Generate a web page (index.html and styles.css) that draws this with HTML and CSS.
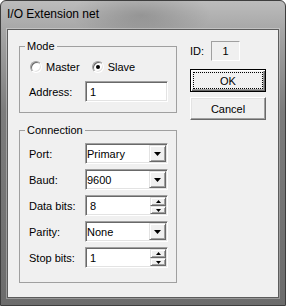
FILE: index.html
```html
<!DOCTYPE html>
<html lang="en">
<head>
    <meta charset="UTF-8">
    <title>I/O Extension net</title>
    <link rel="stylesheet" href="styles.css">
</head>
<body>
    <div class="window">
        <div class="titlebar">I/O Extension net</div>

        <div class="client">
            <div class="left">
                <fieldset class="group mode">
                    <legend>Mode</legend>
                    <div class="radios">
                        <label class="radio"><span class="dot"></span>Master</label>
                        <label class="radio"><span class="dot checked"></span>Slave</label>
                    </div>
                    <div class="row address">
                        <span class="lbl">Address:</span>
                        <div class="edit">1</div>
                    </div>
                </fieldset>

                <fieldset class="group conn">
                    <legend>Connection</legend>
                    <div class="row">
                        <span class="lbl">Port:</span>
                        <div class="combo">
                            <span class="val">Primary</span>
                            <span class="drop"><svg width="7" height="4"><polygon points="0,0 7,0 3.5,4" fill="#000"/></svg></span>
                        </div>
                    </div>
                    <div class="row">
                        <span class="lbl">Baud:</span>
                        <div class="combo">
                            <span class="val">9600</span>
                            <span class="drop"><svg width="7" height="4"><polygon points="0,0 7,0 3.5,4" fill="#000"/></svg></span>
                        </div>
                    </div>
                    <div class="row">
                        <span class="lbl">Data bits:</span>
                        <div class="spin">
                            <span class="val">8</span>
                            <span class="updown">
                                <span class="sbtn up"><svg width="5" height="3"><polygon points="2.5,0 5,3 0,3" fill="#000"/></svg></span>
                                <span class="sbtn down"><svg width="5" height="3"><polygon points="0,0 5,0 2.5,3" fill="#000"/></svg></span>
                            </span>
                        </div>
                    </div>
                    <div class="row">
                        <span class="lbl">Parity:</span>
                        <div class="combo">
                            <span class="val">None</span>
                            <span class="drop"><svg width="7" height="4"><polygon points="0,0 7,0 3.5,4" fill="#000"/></svg></span>
                        </div>
                    </div>
                    <div class="row">
                        <span class="lbl">Stop bits:</span>
                        <div class="spin">
                            <span class="val">1</span>
                            <span class="updown">
                                <span class="sbtn up"><svg width="5" height="3"><polygon points="2.5,0 5,3 0,3" fill="#000"/></svg></span>
                                <span class="sbtn down"><svg width="5" height="3"><polygon points="0,0 5,0 2.5,3" fill="#000"/></svg></span>
                            </span>
                        </div>
                    </div>
                </fieldset>
            </div>

            <div class="right">
                <div class="id-row">
                    <span class="id-lbl">ID:</span>
                    <span class="id-box">1</span>
                </div>
                <button class="btn default">OK</button>
                <button class="btn">Cancel</button>
            </div>
        </div>
    </div>
</body>
</html>
```

FILE: styles.css
```css
body {
    margin: 0;
    font-family: 'Liberation Sans', Arial, sans-serif;
    font-size: 11px;
    color: #000000;
    background-color: #ffffff;
}

.window {
    width: 286px;
    height: 306px;
    box-sizing: border-box;
    border: 1px solid #3e3e3e;
    border-radius: 6px 6px 0 0;
    padding: 0 6px 7px 6px;
    display: flex;
    flex-direction: column;
    background:
        radial-gradient(ellipse 70px 28px at 140px 14px, rgba(0, 0, 0, 0.16), rgba(0, 0, 0, 0)),
        linear-gradient(#bcbcbc, #a6a6a6 30px, #7c7c7c 110px, #6c6c6c);
}

.titlebar {
    height: 28px;
    box-sizing: border-box;
    padding-top: 6px;
    font-size: 12px;
    line-height: 15px;
    color: #000000;
}

.client {
    flex: 1;
    display: flex;
    border: 1px solid #5c5c5c;
    background-color: #f0f0f0;
    box-shadow: 0 0 0 1px rgba(255, 255, 255, 0.3);
}

.left {
    margin-left: 11px;
    display: flex;
    flex-direction: column;
}

.group {
    width: 158px;
    box-sizing: border-box;
    margin: 0;
    border: 1px solid #a0a0a0;
    padding: 0 7px 0 9px;
    min-width: 0;
}

.group legend {
    margin-left: -4px;
    padding: 0 2px;
    line-height: 13px;
}

.mode {
    margin-top: 10px;
    padding-bottom: 10px;
}

.conn {
    margin-top: 11px;
    padding-top: 6px;
    padding-bottom: 14px;
    display: flex;
    flex-direction: column;
    gap: 5px;
}

.radios {
    display: flex;
    align-items: center;
    height: 13px;
    margin-top: 7px;
    margin-left: 1px;
}

.radio {
    display: flex;
    align-items: center;
    margin-right: 12px;
}

.dot {
    width: 12px;
    height: 12px;
    box-sizing: border-box;
    border-radius: 50%;
    margin-right: 4px;
    background-color: #ffffff;
    border: 1px solid;
    border-color: #a0a0a0 #ffffff #ffffff #a0a0a0;
    box-shadow: inset 1px 1px 0 #696969, inset -1px -1px 0 #e3e3e3;
    display: flex;
    align-items: center;
    justify-content: center;
}

.dot.checked::after {
    content: '';
    width: 4px;
    height: 4px;
    border-radius: 50%;
    background-color: #000000;
}

.row {
    display: flex;
    align-items: center;
    height: 21px;
}

.address {
    margin-top: 8px;
}

.lbl {
    width: 56px;
}

.edit,
.combo,
.spin {
    width: 83px;
    height: 21px;
    box-sizing: border-box;
    border: 1px solid;
    border-color: #a0a0a0 #ffffff #ffffff #a0a0a0;
    box-shadow: inset 1px 1px 0 #696969, inset -1px -1px 0 #e3e3e3;
    background-color: #ffffff;
    padding: 1px;
    display: flex;
    align-items: center;
}

.edit {
    padding-left: 4px;
}

.val {
    flex: 1;
}

.spin .val {
    padding-left: 3px;
}

.drop,
.sbtn {
    box-sizing: border-box;
    background-color: #f0f0f0;
    border: 1px solid;
    border-color: #e3e3e3 #696969 #696969 #e3e3e3;
    box-shadow: inset 1px 1px 0 #ffffff, inset -1px -1px 0 #a0a0a0;
    display: flex;
    align-items: center;
    justify-content: center;
}

.drop {
    width: 17px;
    height: 17px;
}

.updown {
    display: flex;
    flex-direction: column;
    width: 16px;
    height: 17px;
}

.sbtn.up {
    height: 9px;
}

.sbtn.down {
    height: 8px;
}

.right {
    margin-left: 13px;
    display: flex;
    flex-direction: column;
}

.id-row {
    display: flex;
    align-items: center;
    margin-top: 11px;
    height: 20px;
}

.id-lbl {
    width: 21px;
}

.id-box {
    width: 29px;
    height: 20px;
    box-sizing: border-box;
    border: 1px solid;
    border-color: #a0a0a0 #ffffff #ffffff #a0a0a0;
    text-align: center;
    line-height: 18px;
}

.btn {
    width: 76px;
    height: 23px;
    margin: 5px 0 0 0;
    padding: 0;
    font-family: 'Liberation Sans', Arial, sans-serif;
    font-size: 11px;
    color: #000000;
    background-color: #f0f0f0;
    border: 1px solid;
    border-color: #ffffff #696969 #696969 #ffffff;
    box-shadow: inset -1px -1px 0 #a0a0a0, inset 1px 1px 0 #e3e3e3;
}

.btn.default {
    margin-top: 8px;
    border: 1px solid #000000;
    box-shadow: inset 1px 1px 0 #ffffff, inset -1px -1px 0 #696969, inset -2px -2px 0 #a0a0a0;
    outline: 1px dotted #000000;
    outline-offset: -4px;
}
```
